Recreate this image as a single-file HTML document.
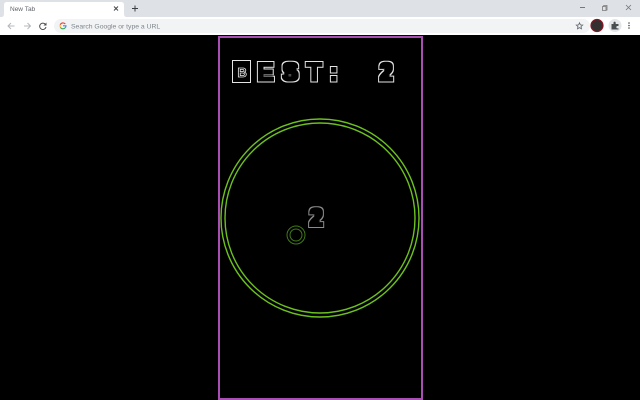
<!DOCTYPE html>
<html lang="en">
<head>
<meta charset="utf-8">
<title>New Tab</title>
<style>
html,body{margin:0;padding:0;background:#000;width:640px;height:400px;overflow:hidden}
svg{display:block;position:absolute;left:0;top:0}
</style>
</head>
<body>
<svg width="640" height="400" viewBox="0 0 640 400" xmlns="http://www.w3.org/2000/svg" font-family="'Liberation Sans',sans-serif">
  <defs>
    <filter id="oW" x="-30%" y="-30%" width="160%" height="160%" color-interpolation-filters="sRGB">
      <feMorphology in="SourceAlpha" operator="dilate" radius="2" result="a"/>
      <feMorphology in="a" operator="erode" radius="1" result="b"/>
      <feComposite in="a" in2="b" operator="out" result="e"/>
      <feFlood flood-color="#e4e4e4"/>
      <feComposite in2="e" operator="in"/>
    </filter>
    <filter id="oG" x="-30%" y="-30%" width="160%" height="160%" color-interpolation-filters="sRGB">
      <feMorphology in="SourceAlpha" operator="dilate" radius="2" result="a"/>
      <feMorphology in="a" operator="erode" radius="1" result="b"/>
      <feComposite in="a" in2="b" operator="out" result="e"/>
      <feFlood flood-color="#8c8c8c"/>
      <feComposite in2="e" operator="in"/>
    </filter>
  </defs>
  <rect width="640" height="400" fill="#000"/>
  <!-- Tab strip -->
  <rect width="640" height="17" fill="#dee1e6"/>
  <path d="M1 17C3 17 4 16 4 14V5C4 3 5 2 7 2H121C123 2 124 3 124 5V14C124 16 125 17 127 17Z" fill="#fff"/>
  <text x="10" y="11" font-size="6.500" fill="#5f6368">New Tab</text>
  <path d="M114 6.500l4 4M118 6.500l-4 4" stroke="#45474a" stroke-width="1"/>
  <path d="M135 5.500v6M132 8.500h6" stroke="#3c4043" stroke-width="1"/>
  <!-- Window controls -->
  <path d="M580 7.500h5" stroke="#777" stroke-width="1"/>
  <path d="M603.500 5.500h3.500v4.500h-1M603.500 5.500v1M602.500 6.500h3.500v4h-3.500z" stroke="#777" stroke-width=".8" fill="none"/>
  <path d="M626 5l5 5M631 5l-5 5" stroke="#777" stroke-width=".8"/>
  <!-- Toolbar -->
  <rect y="17" width="640" height="18" fill="#fff"/>
  <path d="M14.500 26h-6M11 23l-3 3 3 3" stroke="#b5b8bc" stroke-width="1" fill="none"/>
  <path d="M24 26h6M27.500 23l3 3-3 3" stroke="#b5b8bc" stroke-width="1" fill="none"/>
  <path d="M45.500 24.500A3.200 3.200 0 1 0 46 27" stroke="#4a4d50" stroke-width="1" fill="none"/>
  <path d="M46.500 22.500v3h-3z" fill="#4a4d50"/>
  <rect x="54" y="19" width="536" height="14" rx="7" fill="#f1f3f4"/>
  <!-- Google G -->
  <path d="M65.300 24A3 3 0 0 0 60.200 24.800" stroke="#ea4335" stroke-width="1.100" fill="none"/>
  <path d="M60.200 24.800A3 3 0 0 0 60.400 27.400" stroke="#fbbc05" stroke-width="1.100" fill="none"/>
  <path d="M60.400 27.400A3 3 0 0 0 65.400 27.600" stroke="#34a853" stroke-width="1.100" fill="none"/>
  <path d="M65.400 27.600A3 3 0 0 0 66 25.800H63" stroke="#4285f4" stroke-width="1.100" fill="none"/>
  <text x="71" y="28.300" font-size="6.800" fill="#80868b">Search Google or type a URL</text>
  <path d="M579.500 22.800l.9 2.100 2.300.2-1.700 1.500.5 2.200-2-1.200-2 1.200.5-2.200-1.700-1.500 2.300-.2z" fill="none" stroke="#5f6368" stroke-width=".8"/>
  <circle cx="597" cy="25.500" r="6" fill="#33302f" stroke="#8c1424" stroke-width="1.200"/>
  <circle cx="615" cy="25.500" r="6.500" fill="#e4e5e7"/>
  <path d="M611.500 24h2v-1.300a1.100 1.100 0 0 1 2.200 0V24h2.800v2h-1a1.200 1.200 0 0 0 0 2.400h1v1.100h-7z" fill="#4a4d50"/>
  <circle cx="629" cy="23" r=".8" fill="#45474a"/><circle cx="629" cy="25.500" r=".8" fill="#45474a"/><circle cx="629" cy="28" r=".8" fill="#45474a"/>

  <!-- Game frame -->
  <rect x="219" y="37" width="203" height="362" fill="none" stroke="#a94fb4" stroke-width="2"/>

  <!-- Score -->
  <rect x="232.500" y="60.500" width="18" height="22" fill="none" stroke="#e4e4e4" stroke-width="1"/>
  <text x="237.500" y="77" font-size="13" font-weight="700" fill="#000" stroke="#e4e4e4" stroke-width=".8">B</text>
  <text x="257.200 282 306.500 329.500" y="80.500" font-size="25" font-weight="700" fill="#fff" filter="url(#oW)">EST:</text>
  <text x="379.300" y="80.500" font-size="25" font-weight="700" fill="#fff" filter="url(#oW)">2</text>

  <!-- Rings -->
  <circle cx="320" cy="218" r="99" fill="none" stroke="#6cc020" stroke-width="1.400"/>
  <circle cx="320" cy="218" r="95" fill="none" stroke="#6cc020" stroke-width="1.400"/>
  <circle cx="296" cy="235" r="9" fill="none" stroke="#3f7a16" stroke-width="1"/>
  <circle cx="296" cy="235" r="6" fill="none" stroke="#3f7a16" stroke-width="1"/>
  <text x="309.300" y="226" font-size="25" font-weight="700" fill="#fff" filter="url(#oG)">2</text>
</svg>
</body>
</html>
